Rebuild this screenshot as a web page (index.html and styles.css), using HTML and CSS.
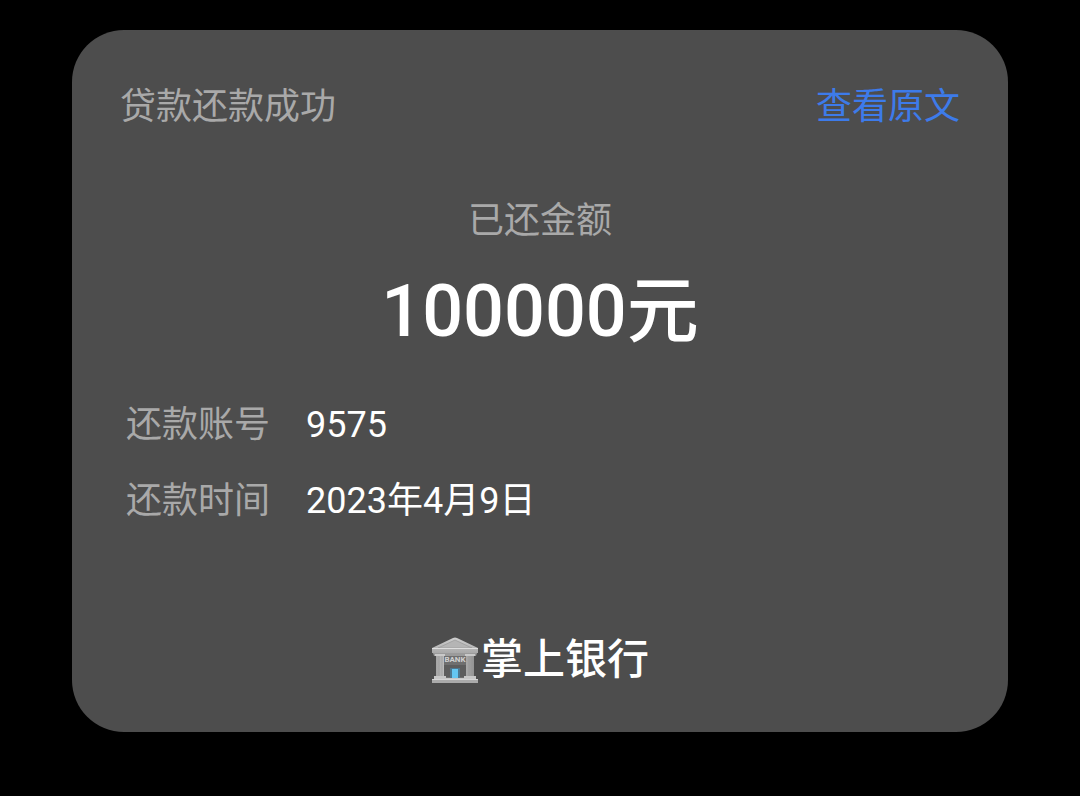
FILE: index.html
```html
<!DOCTYPE html>
<html lang="zh-CN">
<head>
    <meta charset="UTF-8">
    <meta name="viewport" content="width=device-width, initial-scale=1.0">
    <title>贷款还款成功</title>
    <link rel="stylesheet" href="styles.css">
</head>
<body>
    <main class="card">
        <header class="card-header">
            <h1>贷款还款成功</h1>
            <a href="#">查看原文</a>
        </header>
        <section class="amount">
            <p class="amount-label">已还金额</p>
            <p class="amount-value">100000元</p>
        </section>
        <dl class="details">
            <dt>还款账号</dt>
            <dd>9575</dd>
            <dt>还款时间</dt>
            <dd>2023年4月9日</dd>
        </dl>
        <footer class="brand">
            <svg class="bank-icon" viewBox="0 0 48 48" aria-hidden="true">
                <defs>
                    <linearGradient id="stone" x1="0" x2="1" y1="0" y2="0">
                        <stop offset="0" stop-color="#a4a4a4"/>
                        <stop offset=".4" stop-color="#d2d2d2"/>
                        <stop offset="1" stop-color="#939393"/>
                    </linearGradient>
                    <linearGradient id="roof" x1="0" x2="0" y1="0" y2="1">
                        <stop offset="0" stop-color="#d0d0d0"/>
                        <stop offset="1" stop-color="#a9a9a9"/>
                    </linearGradient>
                </defs>
                <rect x="12" y="16" width="24" height="26" fill="#6f6f6f"/>
                <rect x="12" y="29" width="24" height="12" fill="#5d5d5d"/>
                <!-- roof -->
                <path d="M1 12 22 2q2-1 4 0l21 10v5H1z" fill="url(#roof)"/>
                <path d="M7 12 24 4l17 8z" fill="#b5b5b5" stroke="#999" stroke-width=".7"/>
                <path d="M1 12.500h46" stroke="#dedede"/>
                <path d="M2 17h44l-1 3H3z" fill="#9b9b9b"/>
                <!-- columns -->
                <path d="M5 19h8v23H5zM35 19h8v23h-8z" fill="url(#stone)"/>
                <path d="M8 20v21M11 20v21M38 20v21M41 20v21" stroke="#999" stroke-width=".7"/>
                <path d="M4 18h10v2H4zM34 18h10v2H34z" fill="#c9c9c9"/>
                <text x="24" y="26" text-anchor="middle" class="bank-sign">BANK</text>
                <!-- door -->
                <path d="M19 32h10v10H19z" fill="#4d7890"/>
                <path d="M21 33h6v9h-6z" fill="#64c7f2"/>
                <!-- steps -->
                <path d="M3 40h12v2h18v-2h12v3H3z" fill="#c7c7c7"/>
                <path d="M1 43h46v4H1z" fill="#aaa"/>
                <path d="M1 43.500h46" stroke="#d5d5d5"/>
            </svg>
            <span>掌上银行</span>
        </footer>
    </main>
</body>
</html>
```
FILE: styles.css
```css
body {
    margin: 0;
    padding: 30px 72px;
    background-color: #000;
    color: #fff;
    font-family: Roboto, "Noto Sans CJK SC", sans-serif;
    font-size: 36px;
    line-height: 52px;
}
h1, p, dl, dd {
    margin: 0;
    font-size: 36px;
    font-weight: normal;
}
.card {
    padding: 51px 48px 42px;
    border-radius: 52px;
    background-color: #4d4d4d;
}
.card-header {
    display: flex;
    justify-content: space-between;
}
.card-header h1,
.amount-label,
.details dt {
    color: #a9a9a9;
}
.card-header a {
    color: #3d7bea;
    text-decoration: none;
}
.amount {
    margin-top: 62px;
    text-align: center;
}
.amount .amount-value {
    margin-top: 15px;
    font-size: 72px;
    font-weight: 500;
    line-height: 100px;
}
.details {
    display: grid;
    grid-template-columns: max-content 1fr;
    gap: 24px 36px;
    margin: 37px 6px 0;
}
.brand {
    display: flex;
    justify-content: center;
    align-items: center;
    gap: 2px;
    margin-top: 103px;
    font-size: 42px;
    font-weight: 500;
    line-height: 60px;
}
.bank-icon {
    width: 48px;
    height: 48px;
}
.bank-sign {
    fill: #d0d0d0;
    font-size: 8px;
    font-weight: bold;
}
```
